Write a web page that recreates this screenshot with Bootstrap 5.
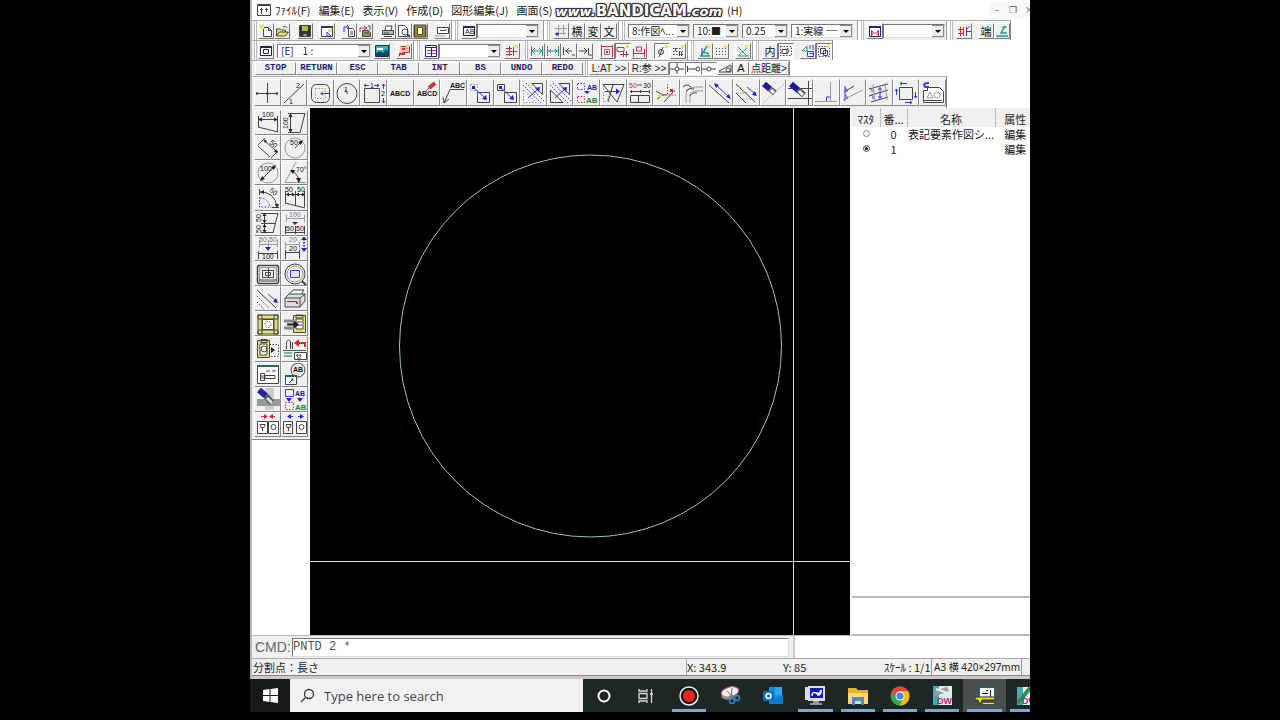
<!DOCTYPE html>
<html lang="ja">
<head>
<meta charset="utf-8">
<meta name="viewport" content="width=device-width, initial-scale=1">
<title>CAD</title>
<link rel="stylesheet" href="https://cdn.jsdelivr.net/npm/bootstrap@5.3.0/dist/css/bootstrap.min.css">
<style>
body{background:#000;font-family:"Noto Sans CJK JP","Noto Sans",sans-serif;font-size:11px;line-height:16px;color:#222}
.desk{max-width:780px;min-height:100vh;padding-bottom:8px}
.win{background:#fff;border-left:2px solid #b8b8b8}
.menubar{height:20px;padding-left:5px}
.menubar a{color:#222;text-decoration:none;margin-right:8px;white-space:nowrap}
.menubar svg{width:14px;height:14px;margin-right:4px}
.wm{font-family:"DejaVu Sans",sans-serif;font-weight:700;font-size:15px;color:#fff;white-space:nowrap;margin:2px 5px 0 -5px;line-height:18px;
 text-shadow:1px 0 #333,-1px 0 #333,0 1px #333,0 -1px #333,1px 1px #333,-1px -1px #333,1px -1px #333,-1px 1px #333,0 0 3px #000}
.wm i{font-size:13px}
.wctl .btn{width:16px;height:17px;padding:0;border:0;border-radius:0;background:#f8f8f8;line-height:14px;font-size:9px;color:#555}
.wctl{margin-right:-7px}
.bar{background:#f0f0f0;width:max-content;border-top:1px solid #aaa;border-right:1px solid #888;box-shadow:inset 0 1px #fff}
.h20{height:20px}
.h16{height:16px}
.grip{width:11px;height:100%;background:linear-gradient(90deg,transparent 1px,#999 1px,#999 2px,#fff 2px,#fff 5px,#bbb 5px,#bbb 6px,#fff 6px,#fff 7px,#bbb 7px,#bbb 8px,transparent 8px)}
.grip0{width:6px;height:100%;background:linear-gradient(90deg,transparent 2px,#bbb 2px,#bbb 3px,#fff 3px,#fff 4px,#bbb 4px,#bbb 5px,transparent 5px)}
.btn.tb{width:16px;height:16px;padding:0;border:1px solid;border-color:#fff #777 #777 #fff;border-radius:0;background:#f0f0f0;display:flex;align-items:center;justify-content:center;font-size:11px;line-height:12px;color:#111;overflow:hidden}
.btn.dn{border-color:#777 #fff #fff #777;background:#f8f8f8}
.g3{margin-left:3px}.g6{margin-left:6px}.g7{margin-left:7px}
.pic{fill:none;stroke:#444;stroke-width:1;display:block;flex:none}
.tb .pic{width:14px;height:14px}
.pic text{stroke:none;fill:#111;font-family:"Liberation Sans",sans-serif;font-size:7px}
.pic .b{stroke:#3a3ad8}.pic .r{stroke:#c8323a}.pic .g{stroke:#1d9a8a}.pic .l{stroke:#999}
.pic .fb{fill:#2222cc;stroke:none}.pic .fr{fill:#d22;stroke:none}.pic .fk{fill:#222;stroke:none}.pic .fy{fill:#e8e070}.pic .fg{fill:#999;stroke:none}.pic .fw{fill:#fff}
.pic .d{stroke-dasharray:1.5 1.5}
.pic .yy{fill:#f0e840;stroke:none}
.form-select.cb{width:62px;height:14px;min-height:0;padding:0 14px 0 3px;border:1px solid;border-color:#777 #ddd #ddd #777;border-radius:0;font-size:10px;line-height:12px;color:#222;
 background:#fff url("data:image/svg+xml,%3Csvg xmlns='http://www.w3.org/2000/svg' width='12' height='12'%3E%3Cpath fill='%23eee' stroke='%23888' d='M0 .5h11.500v11H0'/%3E%3Cpath d='M3 5h6L6 8z'/%3E%3C/svg%3E") right center/12px 12px no-repeat;text-overflow:clip}
.form-select.w93{width:94px}.form-select.w45{width:46px}
.btn.key{width:41px;height:13px;padding:0;border:1px solid;border-color:#fff #888 #888 #fff;border-radius:0;font:700 9px/11px "Liberation Mono",monospace;color:#1d1d66}
.btn.snap{width:40px;height:13px;padding:0;border:1px solid;border-color:#fff #888 #888 #fff;border-radius:0;font-family:"Liberation Sans","Noto Sans CJK JP",sans-serif;font-size:10px;line-height:11px;color:#222;white-space:nowrap}
.h16 .btn.tb{height:13px;font:11px/11px "Liberation Sans",sans-serif}
.big{display:grid;grid-template-columns:repeat(26,1fr);width:692px;margin-left:2px;padding:2px 0}
.big .btn,.side .btn{padding:0;border:1px solid;border-color:#fff #888 #888 #fff;border-radius:0;background:#f0f0f0;display:flex;align-items:center;justify-content:center;overflow:hidden}
.big .btn{height:27px}
.big .pic,.side .pic{width:24px;height:24px}
.work{flex:1 1 auto;min-height:0}
.rail{width:58px}
.side{display:grid;grid-template-columns:1fr 1fr;grid-auto-rows:1fr;height:332px;padding:2px;background:#f0f0f0;border-bottom:1px solid #888}
.cad{background:#000;min-width:0;overflow:hidden}
.cad svg{display:block;width:100%;height:100%;fill:none}
.info{width:180px;border-left:2px solid #f4f4f4;overflow:hidden}
.info table{width:184px;table-layout:fixed;font-size:11px;line-height:15px}
.info th{font-weight:400;background:#f0f0f0;border-right:1px solid #bbb;text-align:center;padding:3px 0 0;height:19px;white-space:nowrap;overflow:hidden}
.info td{padding:0;height:15px;white-space:nowrap;text-align:center;overflow:hidden}
.info input{width:7px;height:7px;display:block;appearance:none;border:1px solid #888;border-radius:50%;margin:0 auto 3px}
.info input:checked{background:#111;box-shadow:inset 0 0 0 1px #fff;border-color:#777}
.note{height:39px;border-top:2px solid #bbb;border-bottom:1px solid #bbb}
.cmd{height:23px;border-top:1px solid #bbb}
.cmdbox{width:543px;background:#f0f0f0;padding-left:3px;border-right:2px solid #ccc}
.cmdbox label{font:14px/20px "Liberation Sans",sans-serif;color:#666;width:37px}
.cmdbox input{flex:1;height:19px;border:1px solid;border-color:#777 #ddd #ddd #777;border-radius:0;padding:0 0 1px;margin-right:4px;font:12px/14px "Liberation Mono",monospace;color:#555;min-width:0}
.stat{height:17px;background:#f0f0f0;border-top:1px solid #aaa;line-height:17px;padding-left:1px;white-space:nowrap}
.stat .c1{width:433px}.stat .c2{width:97px;border-left:1px solid #aaa}.stat .c3{width:101px}.stat .c4{width:48px;border-right:1px solid #999}.stat .c5{width:90px;padding-left:2px;border-right:1px solid #999;font-family:"Noto Sans","Noto Sans CJK JP",sans-serif;font-size:10px}
.seam{height:4px;background:#c9c9c9;border-top:1px solid #888}
.task{height:33px;background:#1f2626;overflow:hidden}
.btn.start{width:40px;height:33px;border:0;border-radius:0;background:#171a1a;padding:0}
.find{width:293px;background:#f1f1f1}
.find input{border:0;background:transparent;font:13px/20px "Open Sans",sans-serif;color:#444;width:240px;padding:0;margin-left:8px}
.find input::placeholder{color:#444;opacity:1}
.apps{flex:1;margin-right:-18px}
.apps .btn{flex:1 1 0;width:0;height:33px;padding:0;border:0;border-radius:0;display:flex;align-items:center;justify-content:center;position:relative}
.apps svg{width:22px;height:22px;fill:none;flex:none}
.apps .on::after{content:"";position:absolute;left:4px;right:4px;bottom:0;height:3px;background:#78a8dc}
.apps .act{background:#4a4f4f}
</style>
</head>
<body>
<div class="desk mx-auto d-flex flex-column overflow-hidden">
<div class="win d-flex flex-column flex-grow-1">
<nav class="menubar d-flex align-items-center">
<svg class="pic" viewBox="0 0 14 14"><path d="M.5 1.500h13v11H.5z"/><path d="M1 2.500h12M3 6.500h3M8 6.500h3M4.500 5v6M9.500 5v4" /></svg>
<a href="#">ﾌｧｲﾙ(F)</a><a href="#">編集(E)</a><a href="#">表示(V)</a><a href="#">作成(D)</a><a href="#">図形編集(J)</a><a href="#">画面(S)</a>
<span class="wm"><i>www.</i>BANDICAM<i>.com</i></span><a href="#">(H)</a>
<div class="wctl d-flex ms-auto"><button class="btn" aria-label="最小化">–</button><button class="btn" aria-label="元に戻す">❐</button><button class="btn" aria-label="閉じる">×</button></div>
</nav>

<div class="bar h20 d-flex align-items-center">
<div class="grip0"></div>
<button class="btn tb" aria-label="新規"><svg class="pic" viewBox="0 0 14 14"><path class="fw" d="M4.500 3.500h5l3 3v6h-8zM9.500 3.500v3h3"/><path class="yy" d="M1 1h4v4H1z"/></svg></button>
<button class="btn tb" aria-label="開く"><svg class="pic" viewBox="0 0 14 14"><path class="fy" d="M1.500 12V5h4l1 1h4v2M1.500 12l3-4h9l-3 4z"/><path d="M8 3q3-2 4 1"/></svg></button>
<button class="btn tb g7" aria-label="保存"><svg class="pic" viewBox="0 0 14 14"><path fill="#333" d="M1.500 1.500h11v11h-11z"/><path fill="#b8b838" stroke="none" d="M4 2h6v5H4z"/><path class="fw" d="M5 10h4v2H5z"/></svg></button>
<button class="btn tb g6" aria-label="環境"><svg class="pic" viewBox="0 0 14 14"><path class="fw" d="M1.500 2.500h11v10h-11z"/><path stroke="#336" stroke-width="2" d="M1 3h12"/><path class="b" d="M7 8l4 4M7 8v4h4"/><path class="yy" d="M8 5h4v3H8z"/></svg></button>
<button class="btn tb g6" aria-label="読込"><svg class="pic" viewBox="0 0 14 14"><path class="fw" d="M6.500 4.500h4l2 2v6h-6z"/><path class="b" d="M2 8V3h5M5 1l2 2-2 2"/><path d="M8 8h3M8 10h3"/></svg></button>
<button class="btn tb" aria-label="部品読込"><svg class="pic" viewBox="0 0 14 14"><path fill="#a09060" d="M4.500 6.500h6l2 2v4h-8z"/><path class="r" d="M2 8V4h6M6 2l3 2-3 2"/><path d="M10 2h2v4M6 9h5"/></svg></button>
<button class="btn tb g7" aria-label="印刷"><svg class="pic" viewBox="0 0 14 14"><path class="fw" d="M4 6l1-4h6l-1 4"/><path fill="#bbb" d="M1.500 6.500h11v4h-11z"/><path d="M3 12.500h8M3 9h5"/></svg></button>
<button class="btn tb" aria-label="印刷プレビュー"><svg class="pic" viewBox="0 0 14 14"><path class="fw" d="M1.500 1.500h6l3 3v8h-9z"/><circle cx="8" cy="8" r="3" stroke="#256"/><path stroke-width="2" d="M10 10l3 3"/></svg></button>
<button class="btn tb" aria-label="用紙"><svg class="pic" viewBox="0 0 14 14"><path fill="#998d20" d="M1 1h12v12H1z"/><path class="fw" d="M4.500 3.500h5v7h-5z"/><path d="M1.500 1v12M12.500 1v12"/></svg></button>
<button class="btn tb g6" aria-label="メール"><svg class="pic" viewBox="0 0 14 14"><path class="fw" d="M2.500 3.500h11v6h-11z"/><path d="M5 6.500h5M11 5v2"/><path class="l" d="M0 12h10"/></svg></button>
<div class="grip"></div>
<button class="btn tb" aria-label="文字種"><svg class="pic" viewBox="0 0 14 14"><path class="fw" stroke="#223" d="M1.500 2.500h11v9h-11z"/><path stroke="#227" stroke-width="2" d="M1 3h12"/><text x="3" y="10" font-size="6">AB</text></svg></button>
<select class="form-select cb" aria-label="文字種"><option></option></select>
<div class="grip g3"></div>
<button class="btn tb" aria-label="グリッド"><svg class="pic" viewBox="0 0 14 14"><path class="l" d="M4.500 1v12M9.500 1v10M1 4.500h12M1 9.500h11"/><circle class="fb" cx="3" cy="10" r="1.500"/></svg></button>
<button class="btn tb">横</button><button class="btn tb">変</button><button class="btn tb">文</button>
<div class="grip"></div>
<select class="form-select cb" aria-label="レイヤ"><option>8:作図ﾍ...</option></select>
<select class="form-select cb w45 g3" aria-label="色"><option>10:■</option></select>
<select class="form-select cb w45 g3" aria-label="線幅"><option>0.25</option></select>
<select class="form-select cb g3" aria-label="線種"><option>1:実線 ──</option></select>
<div class="grip g3"></div>
<button class="btn tb" aria-label="寸法"><svg class="pic" viewBox="0 0 14 14"><path class="fw" stroke="#227" d="M1.500 2.500h11v10h-11z"/><path stroke="#227" stroke-width="2" d="M1 3h12"/><path class="r" d="M3.500 6v6M10.500 6v6M4 9h6M5 7l-2 2 2 2M9 7l2 2-2 2"/></svg></button>
<select class="form-select cb" aria-label="寸法種"><option></option></select>
<div class="grip"></div>
<button class="btn tb" aria-label="属性"><svg class="pic" viewBox="0 0 14 14"><path class="r" d="M3.500 3v9M6.500 3v9M1 5.500h5M1 9.500h5"/><path class="b" d="M9.500 3v9M10 7.500h4"/><path class="r" d="M10 5l3-3"/></svg></button>
<button class="btn tb g6">端</button>
<button class="btn tb" aria-label="角度"><svg class="pic" viewBox="0 0 14 14"><path class="g" stroke-width="1.500" d="M10 2L6 9h6M1 12h12"/><path class="g" d="M7 3h5"/></svg></button>
</div>

<div class="bar h20 d-flex align-items-center">
<div class="grip0"></div>
<button class="btn tb" aria-label="シート"><svg class="pic" viewBox="0 0 14 14"><path class="fw" stroke="#223" d="M1.500 2.500h11v9h-11z"/><path stroke="#227" d="M1 3.500h12M4.500 5.500h5v4h-5z"/></svg></button>
<select class="form-select cb w93 g3" aria-label="シート"><option>[E]&nbsp;&nbsp;&nbsp; 1 :</option></select>
<button class="btn tb g3" aria-label="画像"><svg class="pic" viewBox="0 0 14 14"><path fill="#29b6c6" stroke="#134" d="M.5 1.500h13v11H.5z"/><path fill="#124a5a" stroke="none" d="M1 12V9l4-2 3 2 3-4 2 3v4z"/><path class="fw" stroke="none" d="M2 4h6v2H2z"/></svg></button>
<button class="btn tb g6" aria-label="注記"><svg class="pic" viewBox="0 0 14 14"><path class="r" fill="#fbb" d="M3.500 2.500h9v6h-7l-4 4"/><path class="r" stroke-width="2" d="M5 5h3M9 4l3-2M2 10h6"/><path class="yy" d="M9 1h3v3H9z"/></svg></button>
<div class="grip"></div>
<button class="btn tb" aria-label="線種表"><svg class="pic" viewBox="0 0 14 14"><path class="fw" stroke="#227" d="M1.500 1.500h11v11h-11z"/><path stroke="#227" d="M1 3.500h12M7.500 4v8"/><path class="r" d="M3 6.500h4M3 9.500h4M8 6.500h4M8 9.500h4"/></svg></button>
<select class="form-select cb" aria-label="属性"><option></option></select>
<button class="btn tb g3" aria-label="属性取得"><svg class="pic" viewBox="0 0 14 14"><path class="r" d="M4.500 2v10M8.500 3v9M1 4.500h6M1 7.500h11M1 10.500h6"/><path class="yy" d="M10 1h3v3h-3z"/></svg></button>
<div class="grip0 g3"></div>
<button class="btn tb" aria-label="寸法間隔"><svg class="pic" viewBox="0 0 14 14"><path class="g" d="M1.500 2v10M12.500 2v10M2 7h10M5 4L2 7l3 3M9 4l3 3-3 3"/></svg></button>
<button class="btn tb" aria-label="寸法外側"><svg class="pic" viewBox="0 0 14 14"><path class="g" d="M1.500 2v10M12.500 2v10M2 7h10M5 5L3 7l2 2M9 5l2 2-2 2"/></svg></button>
<button class="btn tb" aria-label="左矢印"><svg class="pic" viewBox="0 0 14 14"><path d="M3 7h7M7 4L4 7l3 3M1.500 3v8M10 11h3"/></svg></button>
<button class="btn tb" aria-label="右矢印"><svg class="pic" viewBox="0 0 14 14"><path d="M1 7h7M6 4l3 3-3 3M10.500 4v7M11 11h3"/></svg></button>
<button class="btn tb g6" aria-label="枠"><svg class="pic" viewBox="0 0 14 14"><path class="r" d="M1.500 1v12M12.500 1v12M2 2.500h10"/><path stroke="#a66" d="M4.500 5.500h5v5h-5z"/><path class="fr" d="M6 7h2v2H6z"/></svg></button>
<button class="btn tb dn" aria-label="段"><svg class="pic" viewBox="0 0 14 14"><path class="r" d="M1 3.500h7v4H1zM4 10.500h9M7.500 8v5M10.500 7v6"/><path class="yy" d="M10 1h3v3h-3z"/></svg></button>
<button class="btn tb" aria-label="幅"><svg class="pic" viewBox="0 0 14 14"><path class="r" d="M1.500 5v8M12.500 5v8M2 9.500h10M4.500 7V3h5v4z"/></svg></button>
<button class="btn tb dn g7" aria-label="直径"><svg class="pic" viewBox="0 0 14 14"><circle cx="6" cy="8" r="2.500"/><path d="M4 13L8 3"/><path class="yy" d="M10 1h3v3h-3z"/></svg></button>
<button class="btn tb" aria-label="公差"><svg class="pic" viewBox="0 0 14 14"><path class="d" d="M2 4.500h8M2 7.500h10M2 10.500h10"/><path d="M4.500 4v3M8.500 8v4M10.500 8v4"/><path class="yy" d="M10 1h3v3h-3z"/></svg></button>
<div class="grip"></div>
<button class="btn tb" aria-label="角度スナップ"><svg class="pic" viewBox="0 0 14 14"><path class="g" stroke-width="1.500" d="M2 12h10M3 12L9 2M5 8l6 2"/><path class="b" d="M4 4v7"/><path class="yy" d="M9 1h3v3H9z"/></svg></button>
<button class="btn tb" aria-label="格子"><svg class="pic" viewBox="0 0 14 14"><path stroke-dasharray="1 2" d="M2 4.500h10M2 7.500h10M2 10.500h10"/><path class="yy" d="M10 1h3v3h-3z"/></svg></button>
<button class="btn tb g6" aria-label="交点"><svg class="pic" viewBox="0 0 14 14"><path class="g" d="M2 3l9 9M11 4l-9 8h11"/><path class="yy" d="M9 1h3v3H9z"/></svg></button>
<div class="grip"></div>
<button class="btn tb">内</button>
<button class="btn tb dn" aria-label="選択"><svg class="pic" viewBox="0 0 14 14"><path class="d b" d="M1.500 2.500h11v9h-11z"/><path d="M3 5.500h5v4H3zM8 4l2 3-2 3"/></svg></button>
<button class="btn tb g6" aria-label="変形"><svg class="pic" viewBox="0 0 14 14"><path class="g" d="M1 7l5-5v5M2 7h5"/><path class="b" d="M6.500 7.500h6v5h-6zM8.500 9.500h4v3M9 1v4M12 1v5"/></svg></button>
<button class="btn tb dn" aria-label="囲み"><svg class="pic" viewBox="0 0 14 14"><path class="d b" d="M1.500 2.500h11v10h-11z"/><path d="M3.500 4.500h5v5h-5zM6.500 6.500h4v5h-4z"/><path class="yy" d="M10 1h3v3h-3z"/></svg></button>
</div>

<div class="bar h16 d-flex align-items-center">
<div class="d-flex g3"><button class="btn key">STOP</button><button class="btn key">RETURN</button><button class="btn key">ESC</button><button class="btn key">TAB</button><button class="btn key">INT</button><button class="btn key">BS</button><button class="btn key">UNDO</button><button class="btn key">REDO</button></div>
<div class="grip0"></div>
<button class="btn snap">L:AT &gt;&gt;</button><button class="btn snap">R:参 &gt;&gt;</button>
<button class="btn tb dn" aria-label="点上"><svg class="pic" viewBox="0 0 14 14"><path d="M0 7h5M9 7h5M7 1v4M7 9v4"/><circle cx="7" cy="7" r="2"/></svg></button>
<button class="btn tb dn" aria-label="端点"><svg class="pic" viewBox="0 0 14 14"><path d="M1 7h9M1.500 4v6"/><circle cx="12" cy="7" r="2"/></svg></button>
<button class="btn tb dn" aria-label="中点"><svg class="pic" viewBox="0 0 14 14"><path d="M0 7h5M9 7h5"/><circle cx="7" cy="7" r="2"/></svg></button>
<button class="btn tb" aria-label="接点"><svg class="pic" viewBox="0 0 14 14"><path d="M1 9l12-6M1 10h12v-7"/><circle cx="10" cy="8" r="2"/></svg></button>
<button class="btn tb">A</button><button class="btn snap">点距離&gt;</button>
</div>

<div class="bar"><div class="big">
<button class="btn" aria-label="点"><svg class="pic" viewBox="0 0 24 24"><path d="M1 12.500h22M12.500 2v20"/><path class="fk" d="M1 11.500h2v2H1zM21 11.500h2v2h-2zM11.500 11.500h2v2h-2z"/></svg></button>
<button class="btn" aria-label="線"><svg class="pic" viewBox="0 0 24 24"><path d="M2 22L22 3"/><text x="14" y="7">2</text><text x="7" y="23">1</text></svg></button>
<button class="btn" aria-label="矩形"><svg class="pic" viewBox="0 0 24 24"><rect x="2.500" y="3.500" width="18" height="18" rx="5"/><rect class="d l" x="6.500" y="7.500" width="10" height="10"/><path class="b" d="M12 12.500h9M14 10.500l-2 2 2 2"/></svg></button>
<button class="btn" aria-label="円"><svg class="pic" viewBox="0 0 24 24"><circle cx="12" cy="12.500" r="10"/><path d="M13 13l-3-4"/><text x="9" y="11" font-size="6">1</text></svg></button>
<button class="btn" aria-label="長方形"><svg class="pic" viewBox="0 0 24 24"><path d="M2.500 7.500h15v14h-15z"/><path class="b" d="M2 4.500h5M12 4.500h5M4 3L2 4.500 4 6M15 3l2 1.500L15 6M21.500 3v5M21.500 17v5M20 5l1.500-2L23 5M20 20l1.500 2 1.500-2"/><text x="8" y="7">1</text><text x="19" y="15">2</text></svg></button>
<button class="btn" aria-label="文字"><svg class="pic" viewBox="0 0 24 24"><text x="2" y="15" font-weight="700">ABCD</text></svg></button>
<button class="btn" aria-label="文字修正"><svg class="pic" viewBox="0 0 24 24"><text x="2" y="15" font-weight="700">ABCD</text><path class="r" stroke-width="4" d="M14 7l6-5"/><path class="r" d="M11 10l3-3"/></svg></button>
<button class="btn" aria-label="引出線"><svg class="pic" viewBox="0 0 24 24"><path d="M2 22L8 8.500h14M1 16l1 6 5-4"/><text x="8" y="7" font-weight="700">ABC</text></svg></button>
<button class="btn" aria-label="複写"><svg class="pic" viewBox="0 0 24 24"><path class="d l" d="M2.500 3.500h7v6h-7z"/><path d="M9.500 11.500h12v10h-12z"/><path class="b" d="M5 6l12 11"/><path class="fb" d="M19 19l-5-1 4-4zM4 5h3v3H4z"/></svg></button>
<button class="btn" aria-label="移動"><svg class="pic" viewBox="0 0 24 24"><path d="M2.500 3.500h7v6h-7zM9.500 11.500h12v10h-12z"/><path class="b" d="M5 6l12 11"/><path class="fb" d="M19 19l-5-1 4-4zM4 5h3v3H4z"/></svg></button>
<button class="btn" aria-label="ミラー複写"><svg class="pic" viewBox="0 0 24 24"><path d="M11 2.500h10.500v11z"/><path class="d l" d="M2.500 9v12.500H15z"/><path class="b" d="M7 17l10-9"/><path class="b d" d="M2 4l18 18M5 2l18 18"/><path class="fb" d="M19 6l-1 5-4-4z"/></svg></button>
<button class="btn" aria-label="ミラー移動"><svg class="pic" viewBox="0 0 24 24"><path d="M11 2.500h10.500v11zM2.500 9v12.500H15z"/><path class="b" d="M7 17l10-9"/><path class="b d" d="M2 4l18 18M5 2l18 18"/><path class="fb" d="M19 6l-1 5-4-4z"/></svg></button>
<button class="btn" aria-label="文字置換"><svg class="pic" viewBox="0 0 24 24"><path class="b d" d="M2.500 2.500h7v6h-7z"/><path class="r d" d="M2.500 15.500h7v6h-7z"/><path class="fb" d="M9 10h6l-3 3z"/><text x="12" y="9" font-weight="700" style="fill:#22a">AB</text><text x="11" y="22" font-weight="700" style="fill:#183;font-size:8px">AB</text></svg></button>
<button class="btn" aria-label="変形"><svg class="pic" viewBox="0 0 24 24"><path class="d l" d="M2.500 21V3.500H12L6 20z"/><path d="M2 3.500h21L16 21zM12 4l-5 17"/><path class="b" d="M4 10.500h12"/><path class="fb" d="M19 10.500l-4-3v6z"/></svg></button>
<button class="btn" aria-label="寸法変更"><svg class="pic" viewBox="0 0 24 24"><text x="1" y="7" style="fill:#a33">50</text><text x="15" y="7">30</text><path class="b" d="M9 4h5"/><path d="M2 10.500h20M2.500 14.500h8v7h-8zM10.500 14.500h11v7h-11zM3.500 9v3M12.500 9v3M21.500 9v3"/></svg></button>
<button class="btn" aria-label="面取り"><svg class="pic" viewBox="0 0 24 24"><path d="M9 21L20 9M1 10l7 4h4M8 14l-6 4"/><path class="r d" d="M12.500 3v11H22"/><path class="yy" d="M3 13h4v3H3z"/><path class="fr" d="M15 8h3v3h-3z"/></svg></button>
<button class="btn" aria-label="オフセット"><svg class="pic" viewBox="0 0 24 24"><path d="M5 22V14q0-7 8-8h9M9 22v-7q0-5 6-5h7" class="l"/><path d="M2 6q4-4 8 0M5 10q4-4 8-2M9 15q2-4 7-3"/></svg></button>
<button class="btn" aria-label="伸縮"><svg class="pic" viewBox="0 0 24 24"><path d="M1 4l20 18"/><path class="b" d="M9 5l11 10"/><path class="fb" d="M6 2l5 2-3 3zM23 18l-5-2 3-3z"/></svg></button>
<button class="btn" aria-label="平行線"><svg class="pic" viewBox="0 0 24 24"><path d="M2 3l19 18M2 12l10 10"/><path class="d l" d="M3 12h12M6 18h12"/><path class="b" d="M13 6l7 6"/><path class="fb" d="M23 15l-5-1 3-4z"/></svg></button>
<button class="btn" aria-label="消去"><svg class="pic" viewBox="0 0 24 24"><path class="l d" d="M2 22L23 3"/><path stroke="#1a1a9a" stroke-width="6" d="M3 3l6 5"/><path stroke="#666" stroke-width="6" d="M9 8l5 4"/><path stroke="#fff" stroke-width="3" d="M10 9l3 3"/></svg></button>
<button class="btn" aria-label="部分消去"><svg class="pic" viewBox="0 0 24 24"><path d="M0 7.500h24M0 17.500h24M20.500 0v24"/><path stroke="#1a1a9a" stroke-width="6" d="M3 3l7 6"/><path stroke="#555" stroke-width="6" d="M10 9l6 5"/><path stroke="#fff" stroke-width="3" d="M11 10l4 4"/></svg></button>
<button class="btn" aria-label="垂線"><svg class="pic" viewBox="0 0 24 24"><path class="l" d="M1 20.500h22M16.500 1v20"/><path class="b" d="M12.500 20v-4h4"/></svg></button>
<button class="btn" aria-label="角度線"><svg class="pic" viewBox="0 0 24 24"><path d="M2 19L22 9" class="l"/><path d="M3 11l10-6"/><path class="b" d="M4 5v15M4 7q3 1 2 4M4 14q3 1 2 4"/></svg></button>
<button class="btn" aria-label="等分"><svg class="pic" viewBox="0 0 24 24"><path d="M2 8l19-5M2 15l19-6M4 21l17-5"/><path class="l" d="M6 3l2 18M18 2l2 17"/><path class="b" d="M13 6v12M11 9l2-2 2 2M11 15l2 2 2-2M3 7q3 1 2 4M4 14q3 1 2 4"/></svg></button>
<button class="btn" aria-label="回転"><svg class="pic" viewBox="0 0 24 24"><path d="M5.500 6.500h13v12h-13z"/><path class="b" d="M6 2.500h7M2.500 8v6M21.500 11v6M11 21.500h7M8 1L6 2.500 8 4M1 10l1.500-2L4 10M20 15l1.500 2 1.500-2M16 20l2 1.500-2 1.500"/></svg></button>
<button class="btn" aria-label="図面"><svg class="pic" viewBox="0 0 24 24"><path class="fw" d="M2.500 9.500h4v-3h12l4 4v11h-20z"/><path class="l" d="M6 17l3-6 3 6z"/><circle class="l" cx="16" cy="14" r="3"/><path d="M3 19.500h18"/><path class="b" stroke-width="2" d="M8 2Q1 2 4 6h4"/></svg></button>
</div></div>

<div class="work d-flex">
<div class="rail"><div class="side">
<button class="btn" aria-label="水平寸法"><svg class="pic" viewBox="0 0 24 24"><path d="M2.500 5v11M21.500 5v16M2 8.500h20M2 16l20 5"/><path class="fk" d="M2 8.500l4-2v4zM22 8.500l-4-2v4z"/><text x="6" y="6">100</text></svg></button>
<button class="btn" aria-label="垂直寸法"><svg class="pic" viewBox="0 0 24 24"><path d="M5 2.500h17M5 21.500h12M7.500 3v18M22 2l-5 20"/><path class="fk" d="M7.500 2l2 4h-4zM7.500 22l2-4h-4z"/><text x="-18" y="5" transform="rotate(-90)">100</text></svg></button>
<button class="btn" aria-label="平行寸法"><svg class="pic" viewBox="0 0 24 24"><path d="M2 10l12 11M8 4l13 12M2 9l7-7M15 22l7-7"/><path class="fk" d="M7 3l4 2-2 2zM22 17l-4-1 2-3z"/><text transform="translate(13 7) rotate(43)">50</text></svg></button>
<button class="btn" aria-label="半径寸法"><svg class="pic" viewBox="0 0 24 24"><circle class="l" cx="12" cy="12" r="10"/><path d="M12 12l7-7"/><path class="fk" d="M20 4l-5 2 3 3z"/><text x="7" y="9">50</text></svg></button>
<button class="btn" aria-label="直径寸法"><svg class="pic" viewBox="0 0 24 24"><circle class="l" cx="12" cy="12" r="10"/><path d="M5 19L19 5"/><path class="fk" d="M20 4l-5 2 3 3zM4 20l5-2-3-3z"/><text x="4" y="10">100</text></svg></button>
<button class="btn" aria-label="角度寸法"><svg class="pic" viewBox="0 0 24 24"><path class="l" d="M13 1L2 21.500h21"/><path d="M8 10q8 3 8 11"/><path class="fk" d="M7 9h5l-2 4zM16 22l-3-5h5z"/><text x="13" y="11">70°</text></svg></button>
<button class="btn" aria-label="弧長寸法"><svg class="pic" viewBox="0 0 24 24"><path d="M4 6q15 0 17 15M3.500 3v6M16 21.500h7"/><path class="d b" d="M3.500 11v10h12M4 12q8 0 10 9"/><path class="fk" d="M4 6l4-2v4zM21 22l-2-4h4z"/><text transform="translate(13 5) rotate(40)">50</text></svg></button>
<button class="btn" aria-label="直列寸法"><svg class="pic" viewBox="0 0 24 24"><path d="M2.500 5v12M12.500 5v14M21.500 5v16M2 8.500h20M2 17l20 5"/><path class="fk" d="M3 8.500l3-2v4zM22 8.500l-3-2v4zM12 8.500l-3-2v4zM13 8.500l3-2v4z"/><text x="2" y="6">50</text><text x="14" y="6">50</text></svg></button>
<button class="btn" aria-label="垂直直列"><svg class="pic" viewBox="0 0 24 24"><path d="M5 2.500h17M5 12.500h14M5 21.500h12M8.500 3v18M22 2l-5 20"/><path class="fk" d="M8.500 2l2 3h-4zM8.500 12l2-3h-4zM8.500 13l2 3h-4zM8.500 22l2-3h-4z"/><text x="-11" y="5" transform="rotate(-90)">50</text><text x="-22" y="5" transform="rotate(-90)">50</text></svg></button>
<button class="btn" aria-label="寸法分割"><svg class="pic" viewBox="0 0 24 24"><path class="l" d="M3.500 4v7M21.500 4v7M3 7.500h18"/><path d="M2.500 15v8M12.500 15v8M21.500 15v8M2 21.500h20"/><path class="fb" d="M9 11h6l-3 3z"/><text x="6" y="6" style="fill:#777">100</text><text x="3" y="20">50</text><text x="13" y="20">50</text></svg></button>
<button class="btn" aria-label="寸法結合"><svg class="pic" viewBox="0 0 24 24"><path class="l" d="M3.500 4v7M12.500 4v7M21.500 4v7M3 8.500h18"/><path d="M2.500 15v8M21.500 15v8M2 17.500h20"/><path class="fb" d="M9 11h6l-3 4z"/><text x="3" y="6" style="fill:#777">50</text><text x="13" y="6" style="fill:#777">50</text><text x="6" y="23">100</text></svg></button>
<button class="btn" aria-label="寸法移動"><svg class="pic" viewBox="0 0 24 24"><path class="l" d="M2 8.500h15M2.500 6v7M16.500 6v7"/><path d="M2 16.500h15M2.500 14v9M16.500 14v9"/><path class="b d" stroke-width="2" d="M21 3v10"/><path class="fb" d="M18 4h6l-3-4zM18 12h6l-3 4z"/><text x="6" y="6" style="fill:#777">20</text><text x="6" y="15">20</text></svg></button>
<button class="btn" aria-label="部品"><svg class="pic" viewBox="0 0 24 24"><rect x="1.500" y="3.500" width="21" height="18" rx="2" stroke-width="1.500"/><rect class="l" x="3.500" y="5.500" width="17" height="14"/><path d="M6.500 8.500h11v7h-11zM9.500 10.500h5v3h-5zM12.500 6v9M3 18h18"/></svg></button>
<button class="btn" aria-label="拡大"><svg class="pic" viewBox="0 0 24 24"><circle cx="12" cy="12" r="10"/><circle cx="12" cy="12" r="8" class="l"/><path class="b" fill="#dde6ff" d="M7.500 8.500h9v7h-9z"/><path stroke-width="2" d="M19 19l4 4"/></svg></button>
<button class="btn" aria-label="平行複写"><svg class="pic" viewBox="0 0 24 24"><path d="M1 3l19 18"/><path class="d" d="M1 9l12 12M1 15l7 7"/><path class="b" d="M12 7l8 7"/><path class="fb" d="M22 16l-5-1 3-4z"/></svg></button>
<button class="btn" aria-label="プリンタ"><svg class="pic" viewBox="0 0 24 24"><path class="fw" d="M6 8l4-5h11l-3 5z"/><path fill="#ddd" d="M2 11l4-4h16v7l-5 6H2zM2 11h15v9M17 11l5-4"/><path d="M4 14.500h10"/><path class="fr" d="M13 15h2v2h-2z"/></svg></button>
<button class="btn" aria-label="用紙枠"><svg class="pic" viewBox="0 0 24 24"><path class="fy" d="M2 3h20v4H2zM2 18h20v4H2zM2 3h4v19H2zM18 3h4v19h-4z"/><path class="fw" d="M6.500 7.500h11v10h-11z"/><circle cx="12" cy="12.500" r="3" class="d"/></svg></button>
<button class="btn" aria-label="貼付"><svg class="pic" viewBox="0 0 24 24"><path class="fy" d="M10.500 3.500h12v17h-12z"/><path class="fw" d="M13 7h7v10h-7z"/><path d="M13 3h7v3h-7zM14 10h5M14 13h5"/><path stroke="#888" stroke-width="3" d="M1 9h10M1 16h10"/><path class="fk" d="M16 12.500l-5-4v8zM4 11.500h7v2H4z"/></svg></button>
<button class="btn" aria-label="切取"><svg class="pic" viewBox="0 0 24 24"><path class="fy" d="M1.500 3.500h12v17h-12z"/><path class="fw" d="M4 7h7v11H4z"/><circle cx="8" cy="12" r="3"/><path d="M5 2.500h6v3H5z"/><path class="d" d="M13.500 7.500h9v12h-9z"/><path class="fk" d="M19 13l-4-3v6z"/></svg></button>
<button class="btn" aria-label="戻す"><svg class="pic" viewBox="0 0 24 24"><path d="M3.500 12V5q2-4 4 0v7M9.500 12V5"/><path class="r" stroke-width="2" d="M22 10V6h-6"/><path class="fr" d="M11 6l5-4v8z"/><path d="M0 13.500h11M1 16h8M1 19h8M11 13.500h12" stroke="#266"/><path class="fw" d="M11.500 15.500h12v7h-12zM13 18h5l-1 2v3h-2v-3z"/></svg></button>
<button class="btn" aria-label="ウィンドウ"><svg class="pic" viewBox="0 0 24 24"><path class="fw" d="M1.500 3.500h21v18h-21z"/><path stroke="#266" stroke-width="2" d="M1 4h22"/><path d="M4.500 11.500h4v7h-4zM9 13.500h10v3H9zM4 14h4M4 16h4"/><path class="b" d="M10 9h4M16 9h4"/></svg></button>
<button class="btn" aria-label="文字登録"><svg class="pic" viewBox="0 0 24 24"><circle cx="15" cy="8" r="7"/><text x="10" y="10" font-weight="700">AB</text><path class="fw" d="M2.500 13.500h11v9h-11z"/><path stroke="#266" stroke-width="2" d="M2 14h12"/><path d="M6 21l4-4M8 17h2v2"/></svg></button>
<button class="btn" aria-label="塗り消し"><svg class="pic" viewBox="0 0 24 24"><path fill="#ccc" stroke="none" d="M9 1h9v22H9z"/><path class="fg" d="M1 12h23v7H1z"/><path stroke="#22229a" stroke-width="6" d="M3 3l7 6"/><path stroke="#555" stroke-width="6" d="M10 9l6 7"/><path stroke="#ddd" stroke-width="3" d="M11 11l5 5"/></svg></button>
<button class="btn" aria-label="置換"><svg class="pic" viewBox="0 0 24 24"><path class="b" d="M2.500 2.500h8v7h-8z"/><path class="r d" d="M2.500 15.500h8v7h-8z"/><path class="fb" d="M3 11h6l-3 4zM14 11h6l-3 4z"/><text x="12" y="9" font-weight="700" style="fill:#22a">AB</text><text x="12" y="23" font-weight="700" style="fill:#183;font-size:8px">AB</text></svg></button>
<button class="btn" aria-label="寄せ"><svg class="pic" viewBox="0 0 24 24"><path class="r" d="M5 4.500h5M14 4.500h5"/><path class="fr" d="M12 4.500L8 2v5zM13 4.500L17 2v5z"/><path class="fw" d="M1.500 9.500h10v12h-10zM12.500 9.500h10v12h-10z"/><path d="M4 12.500h5l-1 3H5zM6.500 15v4"/><circle cx="17.500" cy="15" r="2.500"/></svg></button>
<button class="btn" aria-label="離す"><svg class="pic" viewBox="0 0 24 24"><path class="b" d="M6 4.500h4M15 4.500h4"/><path class="fb" d="M4 4.500L8 2v5zM21 4.500L17 2v5z"/><path class="fw" d="M.5 9.500h9v12h-9zM13.500 9.500h10v12h-10z"/><path d="M3 12.500h5l-1 3H4zM5.500 15v4"/><circle cx="18.500" cy="15" r="2.500"/></svg></button>
</div></div>
<div class="cad flex-grow-1"><svg viewBox="0 0 540 527" preserveAspectRatio="xMinYMin meet" role="img" aria-label="作図領域"><circle cx="280.500" cy="238" r="191" stroke="#9fc4bc"/><path stroke="#ddd" d="M0 453.500h540M483.500 0v527"/></svg></div>
<div class="info d-flex flex-column">
<table><colgroup><col style="width:28px"><col style="width:27px"><col style="width:88px"><col></colgroup>
<thead><tr><th>ﾏｽﾀ</th><th>番...</th><th>名称</th><th>属性</th></tr></thead>
<tbody><tr><td><input type="radio" name="m" aria-label="マスタ 0"></td><td>0</td><td>表記要素作図シ...</td><td>編集</td></tr>
<tr><td><input type="radio" name="m" checked aria-label="マスタ 1"></td><td>1</td><td></td><td>編集</td></tr></tbody></table>
<div class="note mt-auto"></div>
</div>
</div>

<div class="cmd d-flex"><div class="cmdbox d-flex align-items-center"><label for="cmd">CMD:</label><input id="cmd" type="text" value="PNTD 2 *"></div></div>
<div class="stat d-flex"><div class="c1">分割点：長さ</div><div class="c2">X: 343.9</div><div class="c3">Y: 85</div><div class="c4">ｽｹｰﾙ : 1/1</div><div class="c5">A3 横 420×297mm</div></div>
<div class="seam"></div>
</div>

<div class="task d-flex">
<button class="btn start d-flex align-items-center justify-content-center" aria-label="スタート"><svg width="15" height="15" viewBox="0 0 15 15" fill="#fff"><path d="M0 2l6.500-1v6H0zM7.500 1L15 0v7H7.500zM0 8h6.500v6L0 13zM7.500 8H15v7l-7.500-1z"/></svg></button>
<div class="find d-flex align-items-center"><svg class="ms-2" width="18" height="18" viewBox="0 0 18 18" fill="none" stroke="#333" stroke-width="1.300"><circle cx="11" cy="7" r="4.500"/><path d="M7.500 10.500L3 15"/></svg><input type="text" placeholder="Type here to search" aria-label="検索"></div>
<div class="apps d-flex">
<button class="btn" aria-label="Cortana"><svg viewBox="0 0 22 22"><circle cx="11" cy="11" r="5.500" stroke="#fff" stroke-width="2"/></svg></button>
<button class="btn" aria-label="タスクビュー"><svg viewBox="0 0 22 22" stroke="#ddd" stroke-width="1.300"><path d="M4 8.500h8v5H4zM4 4v2h8V4M4 18v-2h8v2M16.500 4v14M15 9h3"/></svg></button>
<button class="btn on" aria-label="Bandicam"><svg viewBox="0 0 22 22"><circle cx="11" cy="11" r="9" fill="#111" stroke="#eee" stroke-width="1.500"/><circle cx="11" cy="11" r="6" fill="#e8251f"/></svg></button>
<button class="btn" aria-label="Snipping Tool"><svg viewBox="0 0 22 22"><ellipse cx="10" cy="7" rx="9" ry="5" fill="#eee" stroke="#b55" transform="rotate(-15 10 7)"/><path d="M2 11q5 5 11-1" stroke="#988" stroke-width="3"/><path d="M7 6l7 7M12 3l-1 9" stroke="#777"/><circle cx="12" cy="16" r="2.500" stroke="#2a8ad0" stroke-width="1.500"/><circle cx="17" cy="13" r="2.500" stroke="#2a8ad0" stroke-width="1.500"/></svg></button>
<button class="btn" aria-label="Outlook"><svg viewBox="0 0 22 22"><path fill="#1490df" d="M7 2h13v17H7z"/><path fill="#28a8ea" d="M13 2h7v8h-7z"/><path fill="#0f78d4" d="M7 10l7 4 7-4v9H7z"/><path fill="#0f6cc4" d="M1 6h11v10H1z"/><circle cx="6.500" cy="11" r="2.500" stroke="#fff" stroke-width="1.500"/></svg></button>
<button class="btn on" aria-label="モニタ"><svg viewBox="0 0 22 22"><path fill="#ddd" d="M1 2h4v13H1zM4 1h17v15H4z"/><path fill="#0f18c0" d="M6 3h13v10H6z"/><path stroke="#fff" stroke-width="1.500" d="M8 11q0-5 4-3t5-3q1 5-4 5"/><path fill="#999" d="M9 16h6v2h3v2H6v-2h3z"/></svg></button>
<button class="btn on" aria-label="エクスプローラー"><svg viewBox="0 0 22 22"><path fill="#e8b030" d="M1 3h8l2 2h10v14H1z"/><path fill="#ffd76a" d="M1 8h20v11H1z"/><path fill="#3d8fd0" d="M5 12h12v8h-3v-4H8v4H5z"/></svg></button>
<button class="btn on" aria-label="Chrome"><svg viewBox="0 0 22 22"><circle cx="11" cy="11" r="9.500" fill="#34a853"/><path fill="#ea4335" d="M2.800 6.300A9.500 9.500 0 0 1 19.200 6.300H11L7 13z"/><path fill="#fbbc05" d="M19.200 6.300A9.500 9.500 0 0 1 10.500 20.500L15 13 11 6.300z"/><circle cx="11" cy="11" r="4.500" fill="#fff"/><circle cx="11" cy="11" r="3.500" fill="#4285f4"/></svg></button>
<button class="btn on" aria-label="DW"><svg viewBox="0 0 22 22"><path fill="#d9f0f0" d="M2 1h19v19H2z"/><path fill="#4aa" d="M2 1h6v19H2z"/><path stroke="#999" stroke-width="5" d="M3 9l14-5"/><path stroke="#eee" stroke-width="2" d="M5 4l12 4"/><text x="6" y="19" font-size="9" font-weight="700" font-family="Liberation Sans" fill="#d01878">DW</text></svg></button>
<button class="btn on act" aria-label="CAD"><svg viewBox="0 0 22 22"><path fill="#f4f4f4" stroke="#266" d="M5.500 1.500h15v13h-15z"/><path stroke="#266" stroke-width="2" d="M5 2h16"/><path stroke="#222" d="M16.500 5v7M12 5.500h2M8 8.500h6"/><path fill="#e8e020" stroke="#332" d="M1 12h20v3H8l-2 5-2-5H1z"/><path stroke="#ddd" d="M9 18.500h11"/></svg></button>
<button class="btn on" aria-label="DW 編集"><svg viewBox="0 0 22 22"><path fill="#e8f4f4" d="M1 2h20v18H1z"/><path fill="#4aa" d="M1 2h6v18H1z"/><path stroke="#385" stroke-width="4" d="M2 18L14 3"/><text x="6" y="19" font-size="9" font-weight="700" font-family="Liberation Sans" fill="#d01878">DW</text></svg></button>
</div>
</div>
</div>
<script src="https://cdn.jsdelivr.net/npm/bootstrap@5.3.0/dist/js/bootstrap.bundle.min.js"></script>
</body>
</html>
